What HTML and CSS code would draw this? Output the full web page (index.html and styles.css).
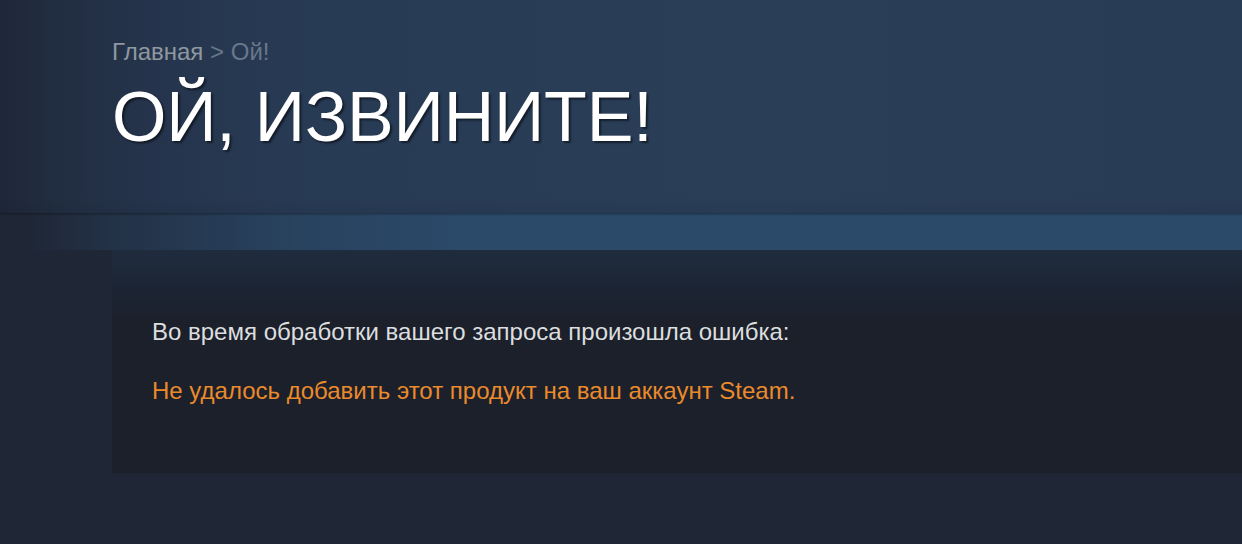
FILE: index.html
```html
<!DOCTYPE html>
<html lang="ru">
<head>
<meta charset="utf-8">
<title>Ой!</title>
<link rel="stylesheet" href="styles.css">
</head>
<body>
<div class="page">
  <header class="page-header">
    <div class="breadcrumbs"><a class="crumb-home" href="#">Главная</a><span class="crumb-sep"> &gt; </span><span class="crumb-current">Ой!</span></div>
    <h1 class="page-title">ОЙ, ИЗВИНИТЕ!</h1>
  </header>
  <div class="band"></div>
  <main class="error-box">
    <p class="error-intro">Во время обработки вашего запроса произошла ошибка:</p>
    <p class="error-message">Не удалось добавить этот продукт на ваш аккаунт Steam.</p>
  </main>
</div>
</body>
</html>
```
FILE: styles.css
```css
html, body {
  margin: 0;
  padding: 0;
}
body {
  background: #1f2737;
  font-family: "Liberation Sans", Arial, sans-serif;
  width: 1242px;
  height: 544px;
  overflow: hidden;
}
.page {
  display: flex;
  flex-direction: column;
}
.page-header {
  height: 213px;
  box-sizing: border-box;
  padding: 39px 0 0 112px;
  background:
    linear-gradient(to bottom, rgba(0,0,0,0) 92%, rgba(0,0,0,0.06) 100%),
    linear-gradient(to right, #1e2738 0%, #212d40 4%, #25344c 12%, #283b55 25%, #2a3e58 60%, #293c56 100%);
}
.breadcrumbs {
  font-size: 24px;
  line-height: 26px;
  color: #67788a;
}
.crumb-home {
  color: #8f98a0;
  text-decoration: none;
}
.page-title {
  margin: 12px 0 0 0;
  font-weight: normal;
  font-size: 70px;
  line-height: 80px;
  color: #ffffff;
  letter-spacing: -0.2px;
  text-shadow: 2px 2px 2px rgba(0,0,0,0.5);
}
.band {
  height: 37px;
  background:
    linear-gradient(to bottom, rgba(0,0,0,0.3) 0px, rgba(0,0,0,0.1) 2px, rgba(0,0,0,0) 3px),
    linear-gradient(to right, rgba(43,74,106,0) 30px, rgba(43,74,106,0.3) 110px, rgba(43,74,106,0.8) 300px, #2b4a6a 500px, #2b4a6a 100%);
}
.error-box {
  margin-left: 112px;
  height: 223px;
  box-sizing: border-box;
  padding: 68px 40px 0 40px;
  background: linear-gradient(to bottom, #1f2c3e 0px, #1c2433 40px, #1b202b 70px, #1b202b 100%);
}
.error-intro {
  margin: 0;
  font-size: 24px;
  line-height: 28px;
  color: #dcdedf;
}
.error-message {
  margin: 31px 0 0 0;
  font-size: 24px;
  line-height: 28px;
  color: #ea8a2c;
}
```
